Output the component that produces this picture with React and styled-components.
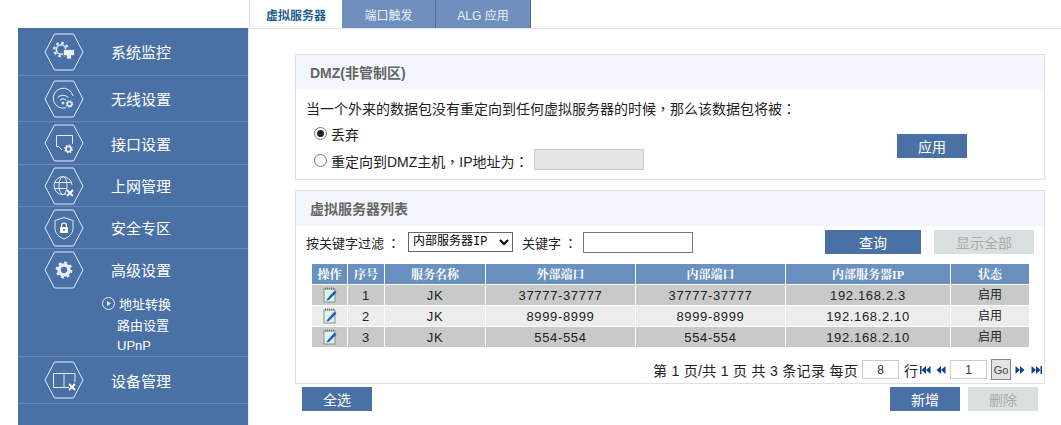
import styled, { createGlobalStyle } from "styled-components";

const LINE = "#e3ecf7";

const GlobalStyle = createGlobalStyle`
    html, body {
        margin: 0;
        height: 100%;
        overflow: hidden;
        background: #fff;
        font-family: "Liberation Sans", "Noto Sans CJK SC", sans-serif;
        color: #222;
    }
`;

const Cog = ({ x, y, r, weight = 0.42 }) => (
    <g stroke={LINE} fill="none">
        <circle cx={x} cy={y} r={r * 0.62} strokeWidth={r * weight} />
        <circle
            cx={x}
            cy={y}
            r={r * 0.9}
            strokeWidth={r * 0.3}
            strokeDasharray={`${r * 0.354} ${r * 0.353}`}
        />
    </g>
);

const Cross = ({ x, y }) => (
    <path d={`M${x - 3} ${y - 3}L${x + 3} ${y + 3}M${x + 3} ${y - 3}L${x - 3} ${y + 3}`} stroke="#fff" strokeWidth="1.8" />
);

const HexIcon = ({ children }) => (
    <HexSvg viewBox="0 0 40 38">
        <polygon points="1,19 10.5,1 29.5,1 39,19 29.5,37 10.5,37" fill="none" stroke={LINE} strokeWidth="1" />
        {children}
    </HexSvg>
);

const icons = {
    monitor: (
        <>
            <Cog x={17} y={16.500} r={7.500} weight={0.2} />
            <path d="M19.500 16.500h11v6h-3v3.500h-5v-3.500h-3z" fill="#eef3fa" stroke="#4a71a6" strokeWidth="0.8" />
        </>
    ),
    wireless: (
        <g fill="none" stroke={LINE} strokeWidth="1">
            <path d="M22 27.800A10 10 0 1 1 29 16" />
            <path d="M13.500 17.500a8 8 0 0 1 11 0M15.800 20a5 5 0 0 1 6.400 0" />
            <circle cx="19" cy="23" r="1" fill={LINE} />
            <Cog x={25.500} y={24} r={3.600} />
        </g>
    ),
    port: (
        <>
            <path d="M22 11.500H12.500V22.500H14.500L18 26M28.500 20V11.500H21" fill="none" stroke={LINE} strokeWidth="1" />
            <Cog x={24.500} y={25} r={4.200} />
        </>
    ),
    globe: (
        <>
            <g fill="none" stroke={LINE} strokeWidth="1">
                <path d="M22.500 27A9 9 0 1 1 28 18" />
                <ellipse cx="19" cy="18.500" rx="4" ry="9" />
                <path d="M10.500 15.500H27.500M10.500 21.500H23" />
            </g>
            <Cross x={26} y={26} />
        </>
    ),
    shield: (
        <>
            <path d="M20 8.500L29 11.500V19.500C29 24.500 25 28 20 30C15 28 11 24.500 11 19.500V11.500Z" fill="none" stroke={LINE} strokeWidth="1" />
            <path d="M17.500 18V16.500a2.500 2.500 0 0 1 5 0V18" fill="none" stroke="#fff" strokeWidth="1.200" />
            <rect x="16" y="18" width="8" height="6" rx="1" fill="#fff" />
            <circle cx="20" cy="21" r="1" fill="#4a71a6" />
        </>
    ),
    gear: <Cog x={20} y={19} r={8} weight={0.45} />,
    book: (
        <>
            <path d="M20 12.500H9.500V26.500H20C20 26.500 20 12.500 20 12.500Z M20 12.500H31V21M20 26.500H25" fill="none" stroke={LINE} strokeWidth="1" />
            <Cross x={28} y={26} />
        </>
    ),
};

const menu = [
    { name: "系统监控", icon: "monitor", height: 47 },
    { name: "无线设置", icon: "wireless", height: 45 },
    { name: "接口设置", icon: "port", height: 42 },
    { name: "上网管理", icon: "globe", height: 41 },
    { name: "安全专区", icon: "shield", height: 41 },
    { name: "高级设置", icon: "gear", height: 41, subs: ["地址转换", "路由设置", "UPnP"] },
    { name: "设备管理", icon: "book", height: 46 },
];

const rows = [
    { id: 1, name: "JK", ext: "37777-37777", int: "37777-37777", ip: "192.168.2.3", state: "启用" },
    { id: 2, name: "JK", ext: "8999-8999", int: "8999-8999", ip: "192.168.2.10", state: "启用" },
    { id: 3, name: "JK", ext: "554-554", int: "554-554", ip: "192.168.2.10", state: "启用" },
];

const columns = [36, 37, 101, 150, 150, 165, 79];

const EditIcon = () => (
    <svg width="14" height="16" viewBox="0 0 14 16">
        <rect x="1" y="2" width="11" height="13" fill="#dff3e6" stroke="#7f9a8c" />
        <path d="M2 1.500h9" stroke="#777" strokeDasharray="1 1" strokeWidth="2" />
        <path d="M4 12L11.500 3.500L13.500 5.500L6 13L3.500 13.500Z" fill="#1d5fc0" />
    </svg>
);

const PagerArrow = ({ dir, bar }) => (
    <svg width="11" height="10" viewBox="0 0 11 10">
        <g fill="#12408f" transform={dir === "left" ? "" : "matrix(-1 0 0 1 11 0)"}>
            {bar && <rect x="0" y="1" width="1.500" height="8" />}
            <path d="M6 1V9L1.500 5Z" />
            <path d="M10.500 1V9L6 5Z" />
        </g>
    </svg>
);

export default function App() {
    return (
        <Page>
            <GlobalStyle />
            <Sidebar>
                {menu.map((item) => (
                    <NavItem key={item.name}>
                        <NavHead $h={item.height}>
                            <HexIcon>{icons[item.icon]}</HexIcon>
                            <NavLabel>{item.name}</NavLabel>
                        </NavHead>
                        {item.subs && (
                            <SubList>
                                {item.subs.map((sub, i) => (
                                    <SubItem key={sub} $active={i === 0}>
                                        {i === 0 && (
                                            <svg width="13" height="13" viewBox="0 0 13 13">
                                                <circle cx="6.500" cy="6.500" r="6" fill="none" stroke={LINE} />
                                                <path d="M5 4V9L9 6.500Z" fill={LINE} />
                                            </svg>
                                        )}
                                        {sub}
                                    </SubItem>
                                ))}
                            </SubList>
                        )}
                    </NavItem>
                ))}
            </Sidebar>
            <Main>
                <TabBar>
                    <Tab $w={92} $active>虚拟服务器</Tab>
                    <Tab $w={94}>端口触发</Tab>
                    <Tab $w={95}>ALG 应用</Tab>
                </TabBar>
                <Content>
                    <Panel $h={126}>
                        <PanelTitle $h={34}>DMZ(非管制区)</PanelTitle>
                        <Intro>当一个外来的数据包没有重定向到任何虚拟服务器的时候<Punct>，</Punct>那么该数据包将被<Punct>：</Punct></Intro>
                        <DmzBody>
                            <div>
                                <RadioRow>
                                    <Radio $checked />
                                    丢弃
                                </RadioRow>
                                <RadioRow>
                                    <Radio />
                                    <span>重定向到DMZ主机<Punct>，</Punct>IP地址为<Punct>：</Punct></span>
                                    <HostInput disabled />
                                </RadioRow>
                            </div>
                            <ApplyButton>应用</ApplyButton>
                        </DmzBody>
                    </Panel>
                    <Panel $h={194}>
                        <PanelTitle $h={35}>虚拟服务器列表</PanelTitle>
                        <FilterRow>
                            按关键字过滤<Colon>：</Colon>
                            <KeySelect defaultValue="ip">
                                <option value="ip">内部服务器IP</option>
                            </KeySelect>
                            <KeyLabel>关键字<Colon>：</Colon></KeyLabel>
                            <KeyInput />
                            <QueryButton>查询</QueryButton>
                            <ShowAllButton>显示全部</ShowAllButton>
                        </FilterRow>
                        <Table>
                            <colgroup>
                                {columns.map((w, i) => (
                                    <col key={i} width={w} />
                                ))}
                            </colgroup>
                            <thead>
                                <tr>
                                    <Th>操作</Th>
                                    <Th>序号</Th>
                                    <Th>服务名称</Th>
                                    <Th>外部端口</Th>
                                    <Th>内部端口</Th>
                                    <Th>内部服务器IP</Th>
                                    <Th>状态</Th>
                                </tr>
                            </thead>
                            <tbody>
                                {rows.map((row) => (
                                    <Tr key={row.id} $even={row.id % 2 === 0}>
                                        <Td><EditIcon /></Td>
                                        <Td>{row.id}</Td>
                                        <Td>{row.name}</Td>
                                        <Td>{row.ext}</Td>
                                        <Td>{row.int}</Td>
                                        <Td>{row.ip}</Td>
                                        <Td $small>{row.state}</Td>
                                    </Tr>
                                ))}
                            </tbody>
                        </Table>
                        <Pager>
                            <PagerInfo>第 1 页/共 1 页 共 3 条记录 每页</PagerInfo>
                            <PageInput defaultValue="8" />
                            <PagerText>行</PagerText>
                            <ArrowGroup $gap={4}>
                                <PagerArrow dir="left" bar />
                                <PagerArrow dir="left" />
                            </ArrowGroup>
                            <PageInput defaultValue="1" />
                            <GoButton>Go</GoButton>
                            <ArrowGroup $gap={5}>
                                <PagerArrow dir="right" />
                                <PagerArrow dir="right" bar />
                            </ArrowGroup>
                        </Pager>
                    </Panel>
                    <ActionBar>
                        <ActionButton>全选</ActionButton>
                        <ActionGroup>
                            <ActionButton>新增</ActionButton>
                            <ActionButton $disabled>删除</ActionButton>
                        </ActionGroup>
                    </ActionBar>
                </Content>
            </Main>
        </Page>
    );
}

const Page = styled.div`
    display: flex;
    height: 425px;
    overflow: hidden;
`;

const Sidebar = styled.nav`
    box-sizing: border-box;
    width: 231px;
    margin: 28px 0 0 18px;
    background: #4a71a6;
    border-right: 1px solid #dde7f5;
    flex-shrink: 0;
`;

const NavItem = styled.div`
    border-bottom: 1px solid #6688b6;
`;

const NavHead = styled.div`
    display: flex;
    align-items: center;
    height: ${(props) => props.$h}px;
    padding-left: 26px;
`;

const HexSvg = styled.svg`
    width: 40px;
    height: 38px;
    flex-shrink: 0;
`;

const NavLabel = styled.span`
    margin-left: 27px;
    font-size: 15px;
    color: #fff;
`;

const SubList = styled.div`
    padding: 3px 0 0;
`;

const SubItem = styled.div`
    display: flex;
    align-items: center;
    gap: 4px;
    height: 21px;
    padding-left: ${(props) => (props.$active ? 84 : 99)}px;
    font-size: 13px;
    color: #fff;
`;

const Main = styled.main`
    flex: 1;
    min-width: 0;
`;

const TabBar = styled.div`
    display: flex;
    box-sizing: border-box;
    height: 29px;
    border-left: 1px solid #dcdfe3;
    border-bottom: 1px solid #dfe2e6;
`;

const Tab = styled.div`
    box-sizing: border-box;
    width: ${(props) => props.$w}px;
    display: flex;
    align-items: center;
    justify-content: center;
    font-size: 12px;
    font-weight: ${(props) => (props.$active ? 700 : 400)};
    color: ${(props) => (props.$active ? "#1d5f94" : "#eaf0f7")};
    background: ${(props) => (props.$active ? "#fff" : "#6f90bd")};
    border-right: ${(props) => (props.$active ? "none" : "1px solid #4d6c95")};
`;

const Content = styled.div`
    width: 750px;
    margin: 25px 0 0 46px;
    display: flex;
    flex-direction: column;
    gap: 10px;
`;

const Panel = styled.section`
    box-sizing: border-box;
    height: ${(props) => props.$h}px;
    border: 1px solid #dcdfe3;
`;

const PanelTitle = styled.h2`
    margin: 0;
    box-sizing: border-box;
    height: ${(props) => props.$h}px;
    line-height: ${(props) => props.$h + 2}px;
    padding-left: 14px;
    font-size: 14px;
    font-weight: 700;
    color: #666;
    background: #f3f7fd;
`;

const Punct = styled.span`
    font-family: "Noto Sans CJK TC", sans-serif;
`;

const Colon = styled(Punct)`
    margin-left: 3px;
`;

const Intro = styled.div`
    height: 20px;
    padding: 9px 0 0 10px;
    font-size: 14px;
    line-height: 20px;
`;

const DmzBody = styled.div`
    display: flex;
    align-items: flex-start;
    justify-content: space-between;
    padding: 2px 77px 0 18px;
`;

const RadioRow = styled.div`
    display: flex;
    align-items: center;
    gap: 4px;
    height: 27px;
    font-size: 14px;
`;

const Radio = styled.span`
    box-sizing: border-box;
    width: 13px;
    height: 13px;
    border: 1px solid #777;
    border-radius: 50%;
    display: flex;
    align-items: center;
    justify-content: center;
    &::after {
        content: "";
        width: 7px;
        height: 7px;
        border-radius: 50%;
        background: ${(props) => (props.$checked ? "#222" : "transparent")};
    }
`;

const HostInput = styled.input`
    box-sizing: border-box;
    width: 110px;
    height: 21px;
    margin: -2px 0 0 1px;
    padding: 0;
    background: #e4e4e4;
    border: 1px solid #ccc;
`;

const BlueButton = styled.button`
    box-sizing: border-box;
    height: 24px;
    padding: 0;
    border: none;
    font-family: inherit;
    font-size: 14px;
    color: #fff;
    background: #4a71a6;
`;

const ApplyButton = styled(BlueButton)`
    width: 70px;
    margin-top: 14px;
`;

const FilterRow = styled.div`
    display: flex;
    align-items: center;
    height: 24px;
    margin-top: 4px;
    padding-left: 10px;
    font-size: 13px;
`;

const KeySelect = styled.select`
    box-sizing: border-box;
    width: 105px;
    height: 20px;
    margin-left: 8px;
    padding: 0;
    background: #fff;
    border: 1px solid #666;
    border-radius: 0;
    font-family: "Liberation Mono", "Noto Sans CJK SC", monospace;
    font-size: 12px;
`;

const KeyLabel = styled.span`
    margin-left: 9px;
`;

const KeyInput = styled.input`
    box-sizing: border-box;
    width: 110px;
    height: 21px;
    margin-left: 6px;
    border: 1px solid #777;
`;

const QueryButton = styled(BlueButton)`
    width: 96px;
    margin-left: 132px;
`;

const ShowAllButton = styled(BlueButton)`
    width: 100px;
    margin-left: 13px;
    color: #aaa;
    background: #d9e0e0;
`;

const Table = styled.table`
    width: 718px;
    margin: 9px 0 0 15px;
    table-layout: fixed;
    border-collapse: collapse;
`;

const Th = styled.th`
    height: 21px;
    padding: 0;
    box-sizing: border-box;
    border: 1px solid #fff;
    background: #6a90c0;
    color: #fff;
    font-size: 12px;
    font-weight: 700;
    font-family: "Liberation Serif", "Noto Serif CJK SC", "Noto Sans CJK SC", serif;
`;

const Tr = styled.tr`
    background: ${(props) => (props.$even ? "#ededed" : "#c9c9c9")};
`;

const Td = styled.td`
    height: 21px;
    padding: 0;
    box-sizing: border-box;
    border: 1px solid #fff;
    text-align: center;
    vertical-align: middle;
    font-size: ${(props) => (props.$small ? 12 : 13)}px;
    letter-spacing: ${(props) => (props.$small ? 0 : 0.65)}px;
    color: #222;
    line-height: 1;
    & > svg {
        display: block;
        margin: 0 auto;
    }
`;

const Pager = styled.div`
    display: flex;
    align-items: center;
    justify-content: flex-end;
    gap: 4px;
    height: 21px;
    margin-top: 11px;
    padding-right: 2px;
    font-size: 14px;
`;

const PagerInfo = styled.span`
    letter-spacing: 0.3px;
`;

const PagerText = styled.span`
    margin: 0 -2px 0 1px;
`;

const ArrowGroup = styled.div`
    display: flex;
    gap: ${(props) => props.$gap}px;
`;

const PageInput = styled.input`
    box-sizing: border-box;
    width: 37px;
    height: 19px;
    padding: 0;
    border: 1px solid #ccc;
    text-align: center;
    font-family: inherit;
    font-size: 12px;
    color: #333;
`;

const GoButton = styled.button`
    box-sizing: border-box;
    width: 20px;
    height: 21px;
    padding: 0;
    background: #e3e3e3;
    border: 1px solid #888;
    font-family: inherit;
    font-size: 11px;
    color: #444;
`;

const ActionBar = styled.div`
    display: flex;
    justify-content: space-between;
    margin-top: -7px;
    padding: 0 7px 0 7px;
`;

const ActionGroup = styled.div`
    display: flex;
    gap: 8px;
`;

const ActionButton = styled(BlueButton)`
    width: 70px;
    color: ${(props) => (props.$disabled ? "#aaa" : "#fff")};
    background: ${(props) => (props.$disabled ? "#d9e0e0" : "#4a71a6")};
`;
